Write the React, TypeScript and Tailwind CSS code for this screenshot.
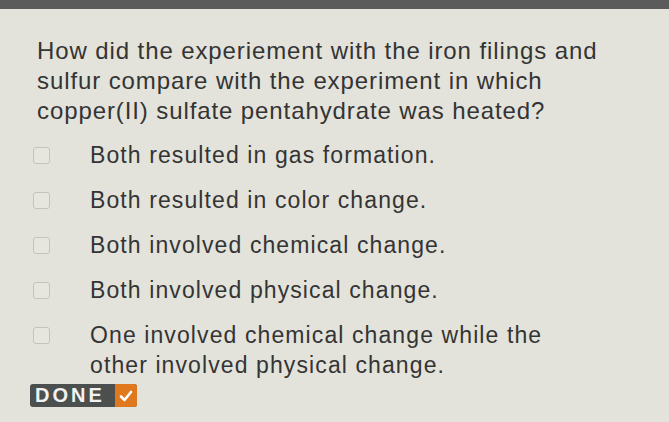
import React from "react";

const options = [
  ["Both resulted in gas formation."],
  ["Both resulted in color change."],
  ["Both involved chemical change."],
  ["Both involved physical change."],
  ["One involved chemical change while the", "other involved physical change."],
];

export default function App() {
  return (
    <div
      className="w-[669px] h-[422px] overflow-hidden bg-[#e3e3db] flex flex-col"
      style={{ fontFamily: '"Liberation Sans", Arial, sans-serif' }}
    >
      <div className="h-[9px] bg-[#5b5b5b] shrink-0" />
      <div className="pl-[37px] pt-[27px] text-[24px] leading-[30px] tracking-[0.9px] text-[#343434] whitespace-nowrap">
        <p>How did the experiement with the iron filings and</p>
        <p>sulfur compare with the experiment in which</p>
        <p>copper(II) sulfate pentahydrate was heated?</p>
      </div>
      <div className="flex flex-col gap-[15px] pt-[14px] pl-[33px]">
        {options.map((lines, i) => (
          <div key={i} className="flex items-start">
            <div className="mt-[7px] w-[17px] h-[17px] rounded-[3px] border border-[#c4c4bc] bg-[#e6e6de] shrink-0" />
            <div className="ml-[40px] text-[23px] leading-[30px] tracking-[1.1px] text-[#343434] whitespace-nowrap">
              {lines.map((l, j) => (
                <p key={j}>{l}</p>
              ))}
            </div>
          </div>
        ))}
      </div>
      <div className="pl-[30px] pt-[4px]">
        <div className="inline-flex items-center h-[23px] rounded-[3px] overflow-hidden bg-[#4b4f4e]">
          <span className="pl-[5px] pr-[10px] text-[20px] font-bold tracking-[3px] text-[#f2f2f2] leading-[23px]">DONE</span>
          <span className="w-[22px] h-[23px] bg-[#e0781e] flex items-center justify-center">
            <svg width="14" height="12" viewBox="0 0 14 12">
              <path d="M2 6.5 L5.5 10 L12 2" stroke="#fff" strokeWidth="2.6" fill="none" strokeLinecap="round" strokeLinejoin="round" />
            </svg>
          </span>
        </div>
      </div>
    </div>
  );
}
